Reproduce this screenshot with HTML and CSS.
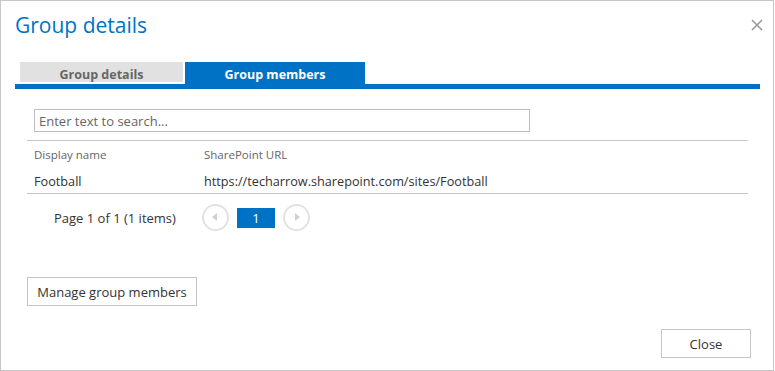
FILE: index.html
```html
<!DOCTYPE html>
<html lang="en">
<head>
  <meta charset="UTF-8" />
  <title>Group details</title>
  <link rel="stylesheet" href="styles.css">
</head>
<body>
  <div class="dialog">
    <div class="dialog-header">
      <h1>Group details</h1>
      <button class="close-x" type="button" aria-label="Close">
        <svg width="12" height="12" viewBox="0 0 12 12"><path d="M1 1 L11 11 M11 1 L1 11" stroke="#9a9a9a" stroke-width="1.6" fill="none"/></svg>
      </button>
    </div>

    <div class="tabs">
      <div class="tab">Group details</div>
      <div class="tab active">Group members</div>
    </div>

    <input class="search" type="text" placeholder="Enter text to search...">

    <table class="members">
      <thead>
        <tr>
          <th class="col-name">Display name</th>
          <th>SharePoint URL</th>
        </tr>
      </thead>
      <tbody>
        <tr>
          <td class="col-name">Football</td>
          <td>https://techarrow.sharepoint.com/sites/Football</td>
        </tr>
      </tbody>
    </table>

    <div class="pager">
      <span class="pager-info">Page 1 of 1 (1 items)</span>
      <span class="pager-btn prev"></span>
      <span class="pager-num">1</span>
      <span class="pager-btn next"></span>
    </div>

    <button class="btn manage" type="button">Manage group members</button>

    <div class="dialog-footer">
      <button class="btn close" type="button">Close</button>
    </div>
  </div>
</body>
</html>
```

FILE: styles.css
```css
body {
  margin: 0;
  font-family: 'Open Sans', 'Noto Sans', sans-serif;
  color: #333;
  background: #fff;
}
.dialog {
  width: 774px;
  height: 371px;
  box-sizing: border-box;
  border: 1px solid #c6c6c6;
  display: flex;
  flex-direction: column;
}
.dialog-header {
  height: 61px;
  box-sizing: border-box;
  display: flex;
  justify-content: space-between;
  align-items: flex-start;
  padding: 9px 10px 0 14px;
}
h1 {
  margin: 0;
  font-size: 21px;
  font-weight: normal;
  line-height: 30px;
  color: #0072c6;
}
.close-x {
  border: none;
  background: none;
  padding: 0;
  margin-top: 9px;
  width: 12px;
  height: 12px;
  cursor: pointer;
}
.tabs {
  display: flex;
  align-items: flex-end;
  gap: 2px;
  margin: 0 13px 0 14px;
  padding-left: 5px;
  border-bottom: 5px solid #0072c6;
}
.tab {
  width: 163px;
  height: 20px;
  box-sizing: border-box;
  margin-bottom: 2px;
  padding-top: 5px;
  line-height: 16px;
  font-size: 12.5px;
  font-weight: bold;
  text-align: center;
  background: #e1e1e1;
  color: #666;
}
.tab.active {
  width: 180px;
  height: 22px;
  margin-bottom: 0;
  background: #0072c6;
  color: #fff;
}
.search {
  width: 496px;
  height: 23px;
  box-sizing: border-box;
  margin: 20px 0 0 33px;
  padding: 0 4px;
  border: 1px solid #bdbdbd;
  font-family: inherit;
  font-size: 13px;
  color: #333;
}
.search::placeholder {
  color: #666;
}
.members {
  width: 721px;
  margin: 8px 0 0 26px;
  border-collapse: collapse;
  border-top: 1px solid #c6c6c6;
  border-bottom: 1px solid #c6c6c6;
}
.members th, .members td {
  text-align: left;
  padding: 0 0 0 7px;
}
.members th {
  height: 27px;
  font-size: 11.5px;
  font-weight: normal;
  color: #666;
}
.members td {
  height: 25px;
  font-size: 12.7px;
  color: #333;
}
.members .col-name {
  width: 163px;
}
.pager {
  display: flex;
  align-items: center;
  height: 27px;
  margin: 10px 0 0 53px;
}
.pager-info {
  font-size: 13px;
  width: 148px;
}
.pager-btn {
  width: 27px;
  height: 27px;
  box-sizing: border-box;
  border: 2px solid #e2e2e2;
  border-radius: 50%;
  position: relative;
}
.pager-btn::after {
  content: '';
  position: absolute;
  top: 7px;
  border-top: 4.5px solid transparent;
  border-bottom: 4.5px solid transparent;
}
.pager-btn.prev::after {
  left: 8px;
  border-right: 5px solid #d0d0d0;
}
.pager-btn.next::after {
  left: 10px;
  border-left: 5px solid #d0d0d0;
}
.pager-num {
  width: 38px;
  height: 20px;
  margin: 0 8px;
  background: #0072c6;
  color: #fff;
  font-size: 13px;
  line-height: 20px;
  text-align: center;
}
.btn {
  height: 29px;
  box-sizing: border-box;
  border: 1px solid #c6c6c6;
  background: #fff;
  font-family: inherit;
  font-size: 13px;
  color: #333;
  cursor: pointer;
}
.manage {
  align-self: flex-start;
  width: 170px;
  margin: 46px 0 0 26px;
}
.dialog-footer {
  margin-top: auto;
  display: flex;
  justify-content: flex-end;
  padding: 0 22px 12px 0;
}
.close {
  width: 90px;
}
```
